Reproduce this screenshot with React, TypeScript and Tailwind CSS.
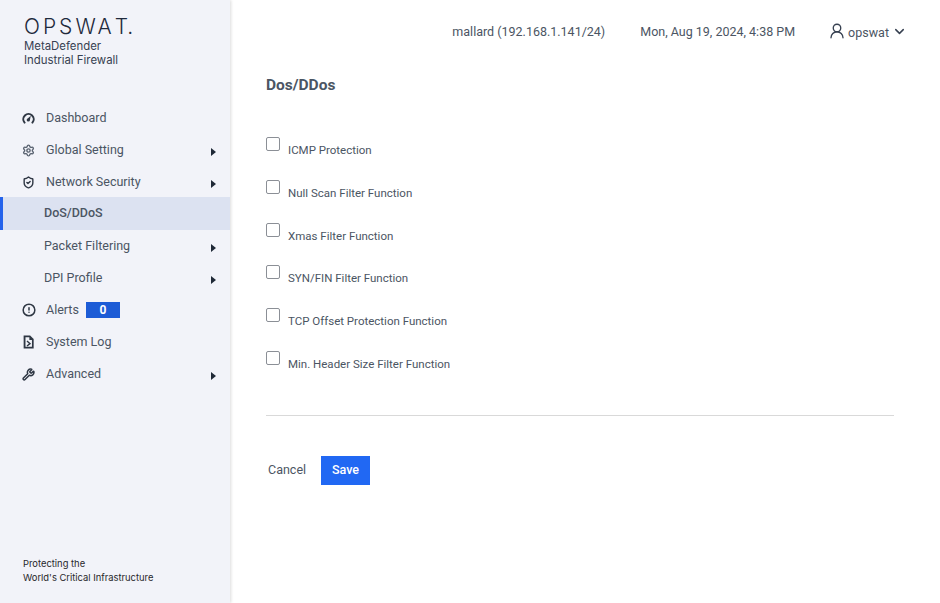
import { ChevronDown, CircleAlert, Settings, ShieldCheck, UserRound, Wrench } from 'lucide-react';
import type { ReactNode } from 'react';

function Caret() {
  return (
    <svg width="5" height="8" viewBox="0 0 5 8" className="ml-auto mt-[3px] mr-[14px] text-[#1f2937]">
      <path d="M0 0 L5 4 L0 8 Z" fill="currentColor" />
    </svg>
  );
}

function DashboardIcon() {
  return (
    <svg width="13" height="12" viewBox="0 0 13 12" fill="none" className="text-[#2f3744]">
      <path d="M2.6 10.6 A5.2 5.2 0 1 1 10.4 10.6" stroke="currentColor" strokeWidth="2" strokeLinecap="round" />
      <path d="M4.6 7.6 L8.8 3.8 L7.8 8.6 Z" fill="currentColor" />
      <circle cx="6.3" cy="8" r="1.6" fill="currentColor" />
    </svg>
  );
}

function LogIcon() {
  return (
    <svg width="13" height="14" viewBox="0 0 12 13" fill="none" className="text-[#2f3744]">
      <path d="M1.5 0.5 H7.5 L10.8 3.8 V12.5 H1.5 Z" fill="currentColor" />
      <path d="M3.2 2 H6.8 V4.6 H9.2 V11 H3.2 Z" fill="#f2f3f9" />
      <path d="M4.6 5.6 L7.4 8 L4.6 10.2" stroke="currentColor" strokeWidth="1.3" />
    </svg>
  );
}

function NavItem({ icon, label, caret, children }: { icon: ReactNode; label: string; caret?: boolean; children?: ReactNode }) {
  return (
    <div className="flex h-[32px] items-center pl-[22px] text-[12.5px] text-[#4b5563]">
      <span className="flex w-[24px] shrink-0 items-center text-[#2f3744]">{icon}</span>
      <span>{label}</span>
      {children}
      {caret && <Caret />}
    </div>
  );
}

function SubItem({ label, caret, active }: { label: string; caret?: boolean; active?: boolean }) {
  if (active) {
    return (
      <div className="-mt-[1px] flex h-[33px] items-center border-l-[3px] border-[#2563eb] bg-[#dce2f1] pl-[41px] text-[12.5px] font-medium text-[#4b5563]">
        {label}
      </div>
    );
  }
  return (
    <div className="flex h-[32px] items-center pl-[44px] text-[12.5px] text-[#4b5563]">
      <span>{label}</span>
      {caret && <Caret />}
    </div>
  );
}

function CheckRow({ label }: { label: string }) {
  return (
    <div className="flex h-[42.8px] items-start">
      <span className="h-[14px] w-[14px] rounded-[2px] border border-[#8b8f96] bg-white" />
      <span className="ml-[8px] mt-[5px] text-[11.5px] leading-[16px] text-[#4b5563]">{label}</span>
    </div>
  );
}

export default function App() {
  return (
    <div className="flex h-[603px] w-[940px] overflow-hidden bg-white font-['Roboto',sans-serif]">
      <aside className="flex w-[230px] shrink-0 flex-col bg-[#f2f3f9] shadow-[1px_0_3px_rgba(0,0,0,0.14)]">
        <div className="pl-[24px] pt-[13px] font-['Inter',sans-serif]">
          <div className="text-[21px] font-light leading-[27px] tracking-[3px] text-[#1f2a3c]">
            OPSWA<span className="tracking-normal">T.</span>
          </div>
          <div className="-mt-[1px] text-[11.4px] leading-[14px] text-[#374151]">
            MetaDefender
            <br />
            Industrial Firewall
          </div>
        </div>
        <nav className="mt-[35px] flex flex-col">
          <NavItem icon={<DashboardIcon />} label="Dashboard" />
          <NavItem icon={<Settings size={13} strokeWidth={2.6} className="text-[#5b6472]" />} label="Global Setting" caret />
          <NavItem icon={<ShieldCheck size={13} strokeWidth={2.6} />} label="Network Security" caret />
          <SubItem label="DoS/DDoS" active />
          <SubItem label="Packet Filtering" caret />
          <SubItem label="DPI Profile" caret />
          <NavItem icon={<CircleAlert size={14} strokeWidth={2.6} />} label="Alerts">
            <span className="ml-[7px] flex h-[16px] w-[34px] items-center justify-center bg-[#1d5cd6] text-[12px] font-bold text-white">0</span>
          </NavItem>
          <NavItem icon={<LogIcon />} label="System Log" />
          <NavItem icon={<Wrench size={13} strokeWidth={2.8} />} label="Advanced" caret />
        </nav>
        <div className="mt-auto pb-[18px] pl-[23px] font-['Inter',sans-serif] text-[9.4px] leading-[14px] text-[#27272a]">
          Protecting the
          <br />
          World's Critical Infrastructure
        </div>
      </aside>

      <main className="flex min-w-0 flex-1 flex-col pl-[36px] pr-[46px]">
        <header className="-mr-[11px] flex h-[64px] items-center justify-end text-[12.5px] text-[#4b5563]">
          <span>mallard (192.168.1.141/24)</span>
          <span className="ml-[35px]">Mon, Aug 19, 2024, 4:38 PM</span>
          <span className="ml-[33px] flex items-center">
            <UserRound size={18} strokeWidth={1.8} className="-mt-[3px] mr-[2px] text-[#374151]" />
            <span className="mt-[2px]">opswat</span>
            <ChevronDown size={15} strokeWidth={2.4} className="-mr-[2px] -mt-[2px] ml-[3px] text-[#374151]" />
          </span>
        </header>
        <h1 className="mt-[12px] text-[15.5px] font-bold leading-[18px] text-[#4b5563]">Dos/DDos</h1>
        <div className="mt-[43px] flex flex-col">
          <CheckRow label="ICMP Protection" />
          <CheckRow label="Null Scan Filter Function" />
          <CheckRow label="Xmas Filter Function" />
          <CheckRow label="SYN/FIN Filter Function" />
          <CheckRow label="TCP Offset Protection Function" />
          <CheckRow label="Min. Header Size Filter Function" />
        </div>
        <div className="mt-[21px] border-t border-[#d9d9d9]" />
        <div className="mt-[40px] flex items-center">
          <span className="ml-[2px] text-[12.5px] text-[#4b5563]">Cancel</span>
          <button className="ml-[15px] h-[29px] w-[49px] bg-[#2168f3] text-[12.5px] font-medium text-white">Save</button>
        </div>
      </main>
    </div>
  );
}
